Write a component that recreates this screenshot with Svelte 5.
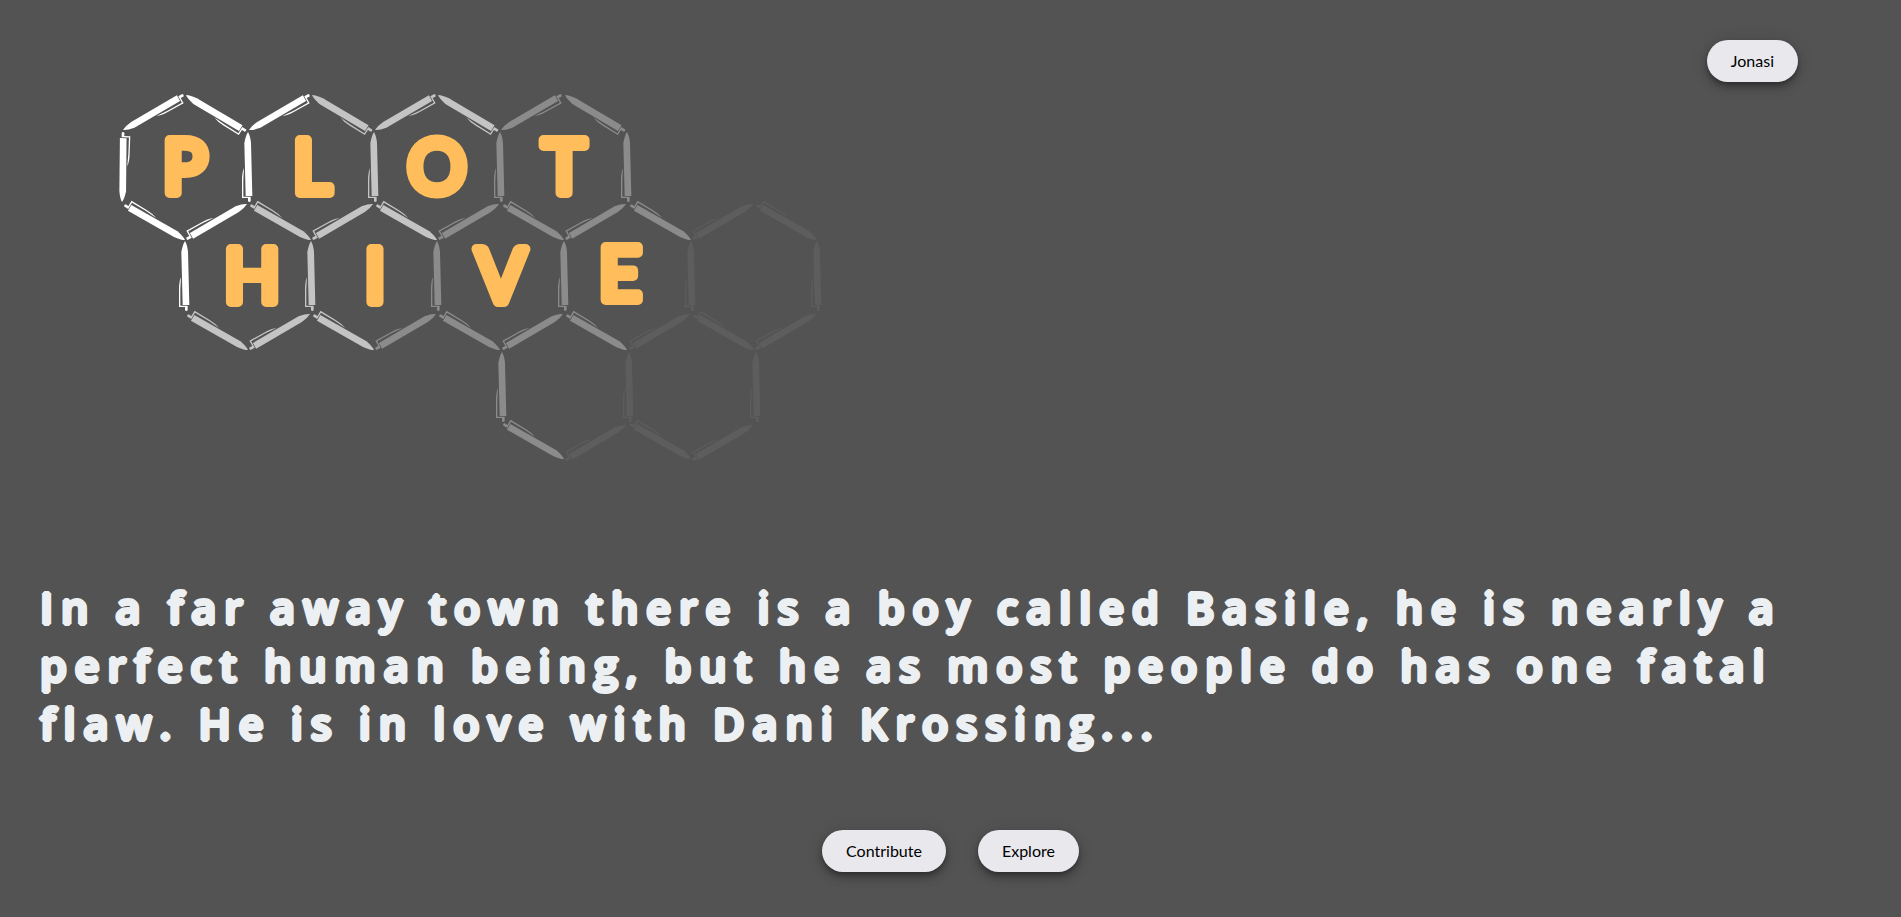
<script>
  // Vertex lattice of the honeycomb: columns step half a cell, rows alternate peak / side.
  const cols = [122, 185, 248, 311, 374, 437, 500, 564, 627, 691, 754, 817];
  const rows = [94, 131, 203, 240, 313, 350, 424, 459];

  // Pen directions: rotation around the tip, and the gap left between tip and vertex.
  const kinds = {
    rise: { angle: -119, dx: 1, dy: -1 },
    fall: { angle: -58, dx: 1, dy: 1 },
    back: { angle: 121, dx: 0, dy: 0 },
    side: { angle: 61, dx: -1, dy: 1 },
    down: { angle: 0, dx: 0, dy: 1 },
    foot: { angle: 0, dx: 2, dy: 2 },
    up: { angle: 182, dx: 0, dy: -1 }
  };

  const tones = { w: '#ffffff', g: '#c4c4c4', m: '#8b8b8b', f: '#5d5d5d' };

  const groups = [
    ['rise', 1, { 0: 'w', 2: 'w', 4: 'g', 6: 'm' }],
    ['fall', 0, { 1: 'w', 3: 'g', 5: 'g', 7: 'm' }],
    ['up', 2, { 0: 'w' }],
    ['down', 1, { 2: 'w', 4: 'g', 6: 'm', 8: 'm' }],
    ['back', 3, { 1: 'w', 3: 'g', 5: 'g', 7: 'm', 9: 'm', 11: 'f' }],
    ['side', 2, { 2: 'w', 4: 'g', 6: 'm', 8: 'm', 10: 'f' }],
    ['down', 3, { 1: 'w', 3: 'g', 5: 'm', 7: 'm', 9: 'f', 11: 'f' }],
    ['back', 5, { 2: 'g', 4: 'g', 6: 'm', 8: 'm', 10: 'f' }],
    ['side', 4, { 3: 'g', 5: 'm', 7: 'm', 9: 'f', 11: 'f' }],
    ['foot', 5, { 6: 'm', 8: 'f', 10: 'f' }],
    ['back', 7, { 7: 'm', 9: 'f' }],
    ['side', 6, { 8: 'f', 10: 'f' }]
  ];

  const pens = groups.flatMap(([kind, row, marks]) =>
    Object.entries(marks).map(([col, tone]) => {
      const k = kinds[kind];
      return { x: cols[col] + k.dx, y: rows[row] + k.dy, angle: k.angle, fill: tones[tone] };
    })
  );

  const letters = [
    ['P', 185, 193], ['L', 312, 193], ['O', 437, 193], ['T', 564, 193],
    ['H', 252, 302], ['I', 375, 302], ['V', 501, 302], ['E', 620, 300]
  ];
</script>

<div class="page">
  <header>
    <svg class="logo" viewBox="118 90 706 372" role="img" aria-label="Plot Hive">
      <defs>
        <g id="pen">
          <path d="M0 0Q7 12 9 33L13 192H-7L-11 33Q-7 10 0 0Z" />
          <path d="M-12 108Q-18 122 -18 145V198H0V208Q4 212 8 208V194H-14V145Z" />
        </g>
      </defs>
      {#each pens as pen}
        <use href="#pen" fill={pen.fill} transform="translate({pen.x} {pen.y}) rotate({pen.angle}) scale(.3333)" />
      {/each}
      {#each letters as [char, x, y]}
        <text {x} {y}>{char}</text>
      {/each}
    </svg>
    <button type="button">Jonasi</button>
  </header>

  <main>
    <p>In a far away town there is a boy called Basile, he is nearly a perfect human being, but he as most people do has one fatal flaw. He is in love with Dani Krossing...</p>
    <div class="actions">
      <button type="button">Contribute</button>
      <button type="button">Explore</button>
    </div>
  </main>
</div>

<style>
  :global(body) {
    background: #535353;
  }

  .page {
    box-sizing: border-box;
    min-height: 100vh;
    padding: 40px;
  }

  header {
    display: flex;
    justify-content: space-between;
    align-items: flex-start;
    padding: 0 63px 0 78px;
  }

  .logo {
    flex: 0 1 706px;
    min-width: 0;
    margin-top: 50px;
  }

  .logo text {
    font: 400 73px Lato, sans-serif;
    text-anchor: middle;
    fill: #ffbe5b;
    stroke: #ffbe5b;
    stroke-width: 10px;
    stroke-linejoin: round;
  }

  /* The ring of shadows thickens the strokes and rounds their ends. */
  p {
    margin: 117px 0 77px;
    color: #ecf0f3;
    font: 600 43px/58px "Open Sans", sans-serif;
    letter-spacing: 8px;
    text-shadow: 2px 0 #ecf0f3, -2px 0 #ecf0f3, 0 2px #ecf0f3, 0 -2px #ecf0f3,
      1px 1px #ecf0f3, -1px 1px #ecf0f3, 1px -1px #ecf0f3, -1px -1px #ecf0f3;
  }

  .actions {
    display: flex;
    justify-content: center;
    gap: 32px;
  }

  button {
    height: 42px;
    padding: 0 24px;
    border: 0;
    border-radius: 21px;
    background: #e9e8ed;
    color: #000;
    font: 400 16px/24px Lato, sans-serif;
    cursor: pointer;
    box-shadow: 0 3px 5px -1px rgba(0, 0, 0, 0.3), 0 6px 10px rgba(0, 0, 0, 0.2), 0 1px 18px rgba(0, 0, 0, 0.12);
  }
</style>
